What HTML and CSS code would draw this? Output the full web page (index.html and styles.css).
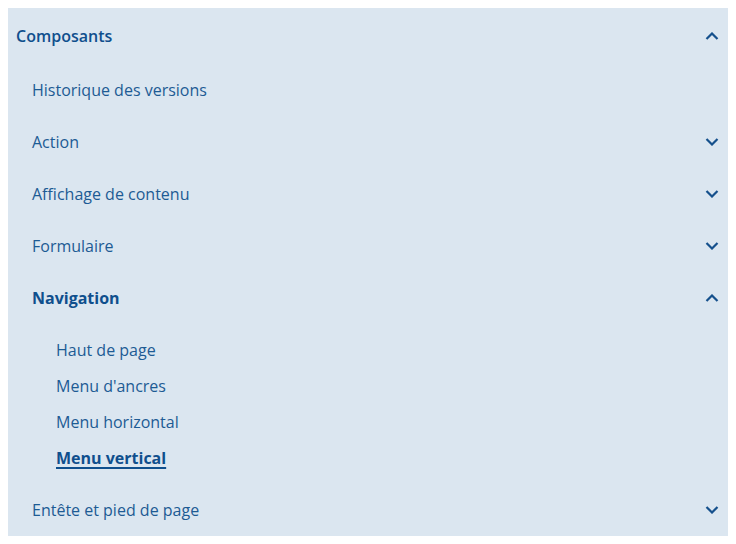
FILE: index.html
```html
<!DOCTYPE html>
<html lang="fr">
<head>
<meta charset="utf-8">
<link rel="stylesheet" href="styles.css">
</head>
<body>
<nav class="menu">
  <div class="head">
    <span class="head-label">Composants</span>
    <svg class="chev" viewBox="0 0 14 8"><path d="M1.5 7 L7 1.5 L12.5 7"/></svg>
  </div>
  <ul class="list">
    <li class="item"><span>Historique des versions</span></li>
    <li class="item"><span>Action</span><svg class="chev" viewBox="0 0 14 8"><path d="M1.5 1 L7 6.5 L12.5 1"/></svg></li>
    <li class="item"><span>Affichage de contenu</span><svg class="chev" viewBox="0 0 14 8"><path d="M1.5 1 L7 6.5 L12.5 1"/></svg></li>
    <li class="item"><span>Formulaire</span><svg class="chev" viewBox="0 0 14 8"><path d="M1.5 1 L7 6.5 L12.5 1"/></svg></li>
    <li class="item open"><span>Navigation</span><svg class="chev" viewBox="0 0 14 8"><path d="M1.5 7 L7 1.5 L12.5 7"/></svg></li>
    <li class="sub">
      <ul class="sublist">
        <li class="subitem">Haut de page</li>
        <li class="subitem">Menu d'ancres</li>
        <li class="subitem">Menu horizontal</li>
        <li class="subitem current">Menu vertical</li>
      </ul>
    </li>
    <li class="item"><span>Entête et pied de page</span><svg class="chev" viewBox="0 0 14 8"><path d="M1.5 1 L7 6.5 L12.5 1"/></svg></li>
  </ul>
</nav>
</body>
</html>
```

FILE: styles.css
```css
html, body { margin: 0; padding: 0; background: #fff; }
body { padding: 8px; font-family: "Open Sans", "Noto Sans", sans-serif; }
.menu {
  background: #dbe6f0;
  width: 720px;
  color: #1d5b94;
}
.head {
  height: 56px;
  display: flex;
  align-items: center;
  justify-content: space-between;
  padding: 0 8px;
  font-size: 16px;
  font-weight: 600;
  color: #0f4f8d;
}
.chev {
  width: 14px;
  height: 8px;
  fill: none;
  stroke: #15508c;
  stroke-width: 2.2;
  margin-right: 1px;
}
.list, .sublist { list-style: none; margin: 0; padding: 0; }
.item {
  height: 52px;
  display: flex;
  align-items: center;
  justify-content: space-between;
  padding: 0 8px 0 24px;
  font-size: 16px;
}
.item.open { font-weight: 700; color: #0f4f8d; }
.sublist { padding: 8px 0; }
.subitem {
  height: 36px;
  display: flex;
  align-items: center;
  padding-left: 48px;
  font-size: 16px;
}
.subitem.current {
  font-weight: 700;
  color: #0f4f8d;
  text-decoration: underline;
  text-underline-offset: 3px;
  text-decoration-thickness: 2px;
}
```
